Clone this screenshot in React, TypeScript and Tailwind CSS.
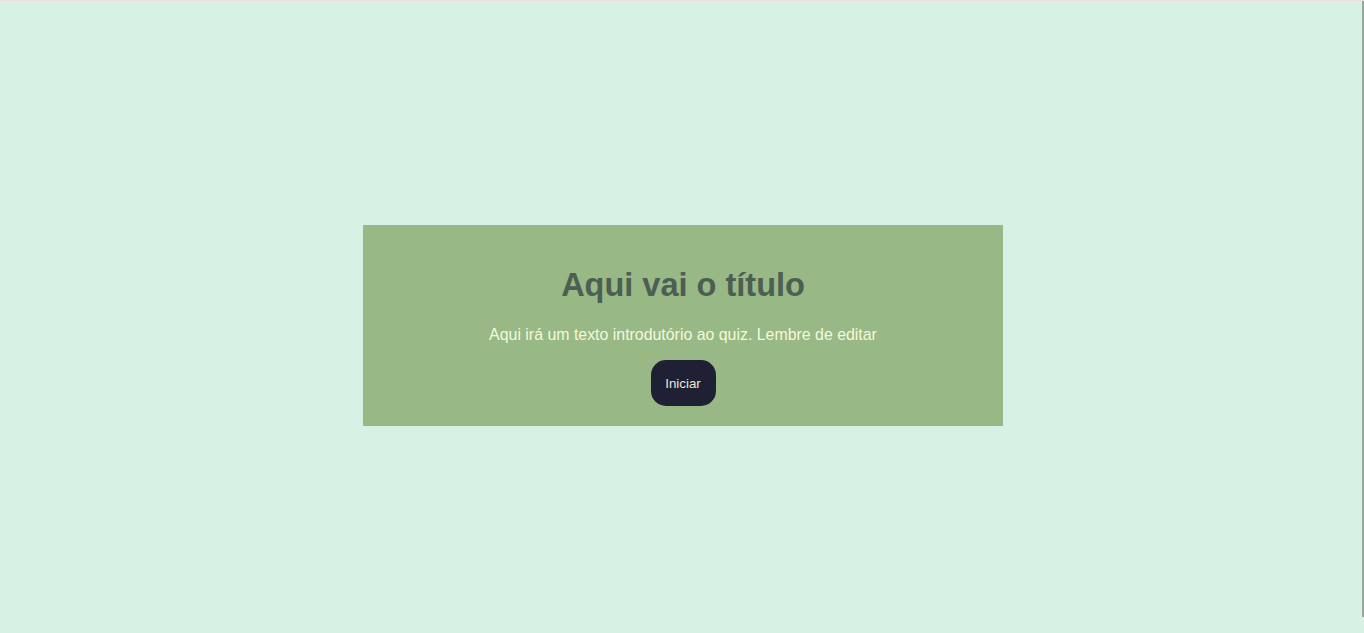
const App = () => (
    <div className="h-[633px] w-full overflow-hidden flex flex-col bg-[#d7f2e4] font-['Liberation_Sans',Arial,sans-serif]">
        <div className="h-px w-full bg-[#eadddd]" />
        <div className="flex flex-1">
            <div className="flex-1 flex flex-col items-center justify-center pt-[17px] pl-1">
                <div className="w-[640px] bg-[#98b885] p-5 flex flex-col items-center text-center">
                    <h1 className="mt-[21px] mb-[22px] text-[32.5px] leading-[38px] font-bold text-[#4d5e52]">Aqui vai o título</h1>
                    <p className="mb-4 text-[15.9px] leading-[18px] text-[#f3f9dd]">
                        Aqui irá um texto introdutório ao quiz. Lembre de editar
                    </p>
                    <button className="h-[46px] w-[65px] pt-px rounded-[15px] bg-[#1f2033] text-[13.33px] text-[#ebe8d2]">
                        Iniciar
                    </button>
                </div>
            </div>
            <div className="w-[2px] h-[616px] bg-[#98a89e]" />
        </div>
    </div>
);

export default App;
